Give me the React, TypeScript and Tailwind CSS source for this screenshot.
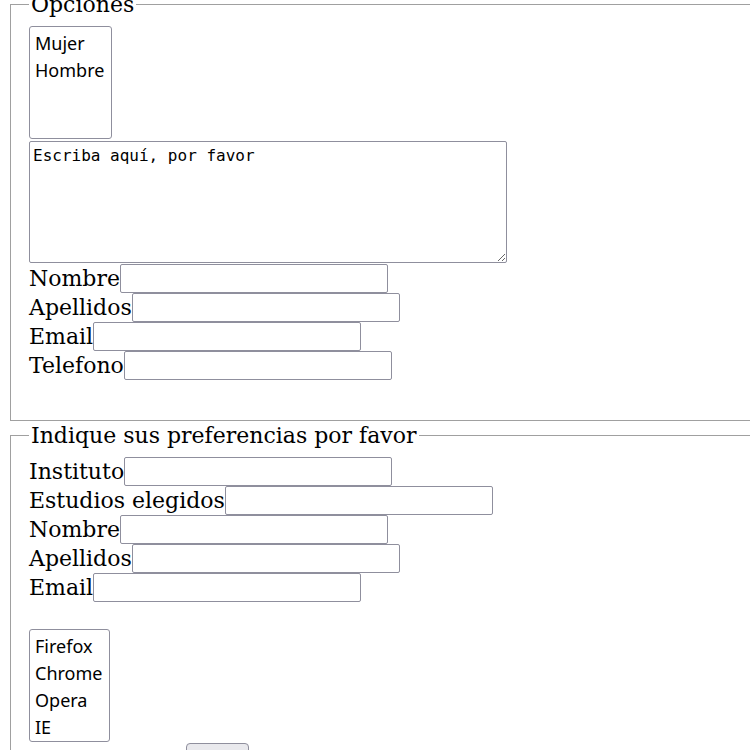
import React from 'react';

const serif = "font-['DejaVu_Serif',serif]";

function Row({ label }: { label: string }) {
  return (
    <div className="flex h-[29px] items-center">
      <span className="text-[22px] leading-[29px] text-black">{label}</span>
      <input
        type="text"
        className="h-[29px] w-[268px] rounded-[2px] border border-[#8f8f9d] bg-white px-[2px] font-['Noto_Sans',sans-serif] text-[13px] outline-none"
      />
    </div>
  );
}

function ListBox({ items, width }: { items: string[]; width: string }) {
  return (
    <div
      className={`${width} h-[113px] rounded-[3px] border border-[#8f8f9d] bg-white pt-[3px] pl-[5px] font-['Noto_Sans',sans-serif] text-[18px] leading-[27px] text-black`}
    >
      {items.map((it) => (
        <div key={it}>{it}</div>
      ))}
    </div>
  );
}

export default function App() {
  return (
    <div className={`h-[750px] w-[750px] overflow-hidden bg-white ${serif}`}>
      <div className="-mt-[8px]">
        <fieldset className="ml-[10px] w-[800px] border border-[#a0a0a0] pl-[18px] pt-[9px] pb-[40px]">
          <legend className="px-[2px] text-[22px] leading-[25px]">Opciones</legend>
          <ListBox items={['Mujer', 'Hombre']} width="w-[83px]" />
          <textarea
            defaultValue="Escriba aquí, por favor"
            className="mt-[2px] block h-[122px] w-[478px] rounded-[2px] border border-[#8f8f9d] bg-white px-[3px] pt-[4px] font-['DejaVu_Sans_Mono',monospace] text-[16px] leading-[19px] outline-none"
          />
          <div className="mt-[1px]">
            <Row label="Nombre" />
            <Row label="Apellidos" />
            <Row label="Email" />
            <Row label="Telefono" />
          </div>
        </fieldset>

        <fieldset className="ml-[10px] mt-[2px] w-[800px] border border-[#a0a0a0] pl-[18px] pt-[9px] pb-[40px]">
          <legend className="px-[2px] text-[22px] leading-[25px]">Indique sus preferencias por favor</legend>
          <Row label="Instituto" />
          <Row label="Estudios elegidos" />
          <Row label="Nombre" />
          <Row label="Apellidos" />
          <Row label="Email" />
          <div className="mt-[27px]">
            <ListBox items={['Firefox', 'Chrome', 'Opera', 'IE']} width="w-[81px]" />
          </div>
          <div className="mt-[1px] pl-[157px]">
            <button className="h-[30px] w-[63px] rounded-[4px] border border-[#8f8f9d] bg-[#e9e9ed] font-['Noto_Sans',sans-serif] text-[13px]">
              Enviar
            </button>
          </div>
        </fieldset>
      </div>
    </div>
  );
}
